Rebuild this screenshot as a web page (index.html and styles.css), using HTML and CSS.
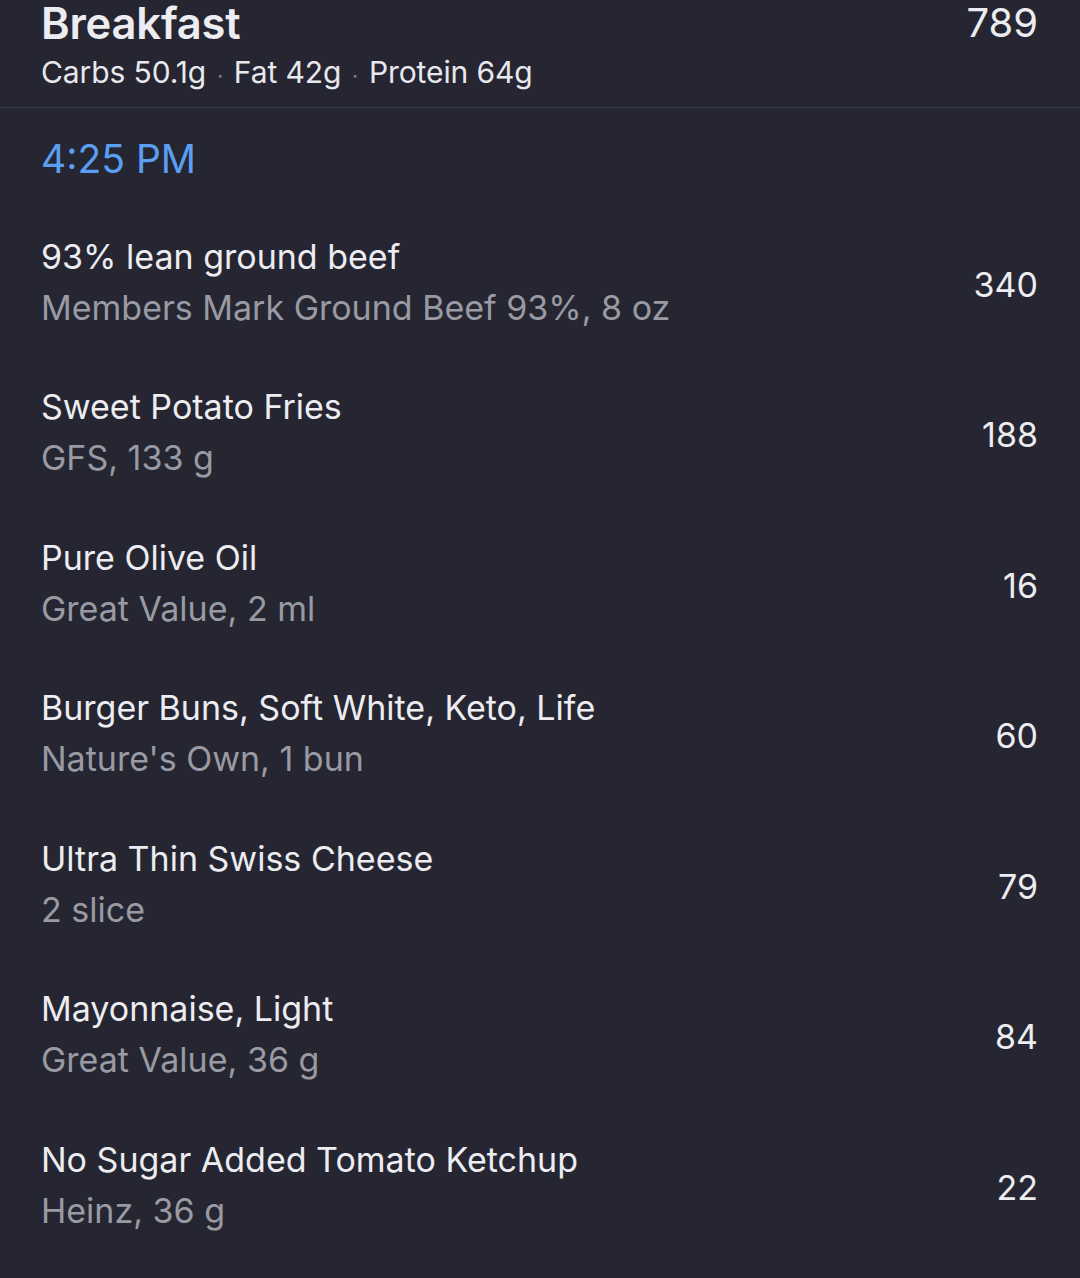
FILE: index.html
```html
<!DOCTYPE html>
<html>
<head>
<meta charset="utf-8">
<link rel="stylesheet" href="styles.css">
</head>
<body>
<div class="screen">
  <header class="meal-header">
    <div class="meal-info">
      <div class="meal-title">Breakfast</div>
      <div class="meal-macros">Carbs 50.1g<span class="dot">·</span>Fat 42g<span class="dot">·</span>Protein 64g</div>
    </div>
    <div class="meal-total">789</div>
  </header>
  <div class="time">4:25 PM</div>
  <ul class="items">
    <li class="item"><div class="item-text"><div class="item-name">93% lean ground beef</div><div class="item-detail">Members Mark Ground Beef 93%, 8 oz</div></div><div class="item-cal">340</div></li>
    <li class="item"><div class="item-text"><div class="item-name">Sweet Potato Fries</div><div class="item-detail">GFS, 133 g</div></div><div class="item-cal">188</div></li>
    <li class="item"><div class="item-text"><div class="item-name">Pure Olive Oil</div><div class="item-detail">Great Value, 2 ml</div></div><div class="item-cal">16</div></li>
    <li class="item"><div class="item-text"><div class="item-name">Burger Buns, Soft White, Keto, Life</div><div class="item-detail">Nature's Own, 1 bun</div></div><div class="item-cal">60</div></li>
    <li class="item"><div class="item-text"><div class="item-name">Ultra Thin Swiss Cheese</div><div class="item-detail">2 slice</div></div><div class="item-cal">79</div></li>
    <li class="item"><div class="item-text"><div class="item-name">Mayonnaise, Light</div><div class="item-detail">Great Value, 36 g</div></div><div class="item-cal">84</div></li>
    <li class="item"><div class="item-text"><div class="item-name">No Sugar Added Tomato Ketchup</div><div class="item-detail">Heinz, 36 g</div></div><div class="item-cal">22</div></li>
  </ul>
</div>
</body>
</html>
```
FILE: styles.css
```css
html, body {
  margin: 0;
  padding: 0;
  background: #252631;
}
.screen {
  width: 1080px;
  height: 1278px;
  overflow: hidden;
  font-family: Inter, "Noto Sans", sans-serif;
  color: #ececf1;
}
.meal-header {
  display: flex;
  justify-content: space-between;
  align-items: flex-start;
  padding: 0 42px 0 41px;
  height: 107px;
  border-bottom: 1px solid #363844;
}
.meal-title {
  font-size: 43.5px;
  font-weight: 600;
  line-height: 46px;
  letter-spacing: -0.2px;
}
.meal-macros {
  font-size: 30px;
  line-height: 36px;
  margin-top: 8px;
  color: #e8e8ee;
  letter-spacing: -0.1px;
}
.dot {
  color: #85868f;
  margin: 0 11px;
  font-size: 20px;
}
.meal-total {
  font-size: 40px;
  line-height: 46px;
}
.time {
  color: #5b9ef2;
  font-size: 39px;
  line-height: 44px;
  padding: 29px 41px 0;
}
.items {
  list-style: none;
  margin: 26px 0 0;
  padding: 0;
}
.item {
  display: flex;
  align-items: center;
  justify-content: space-between;
  padding: 0 42px 0 41px;
  height: 150.5px;
}
.item-name {
  font-size: 34px;
  line-height: 40px;
}
.item-detail {
  font-size: 34px;
  line-height: 40px;
  margin-top: 11px;
  color: #999aa3;
}
.item-cal {
  font-size: 34px;
  line-height: 40px;
  padding-top: 5px;
}
```
